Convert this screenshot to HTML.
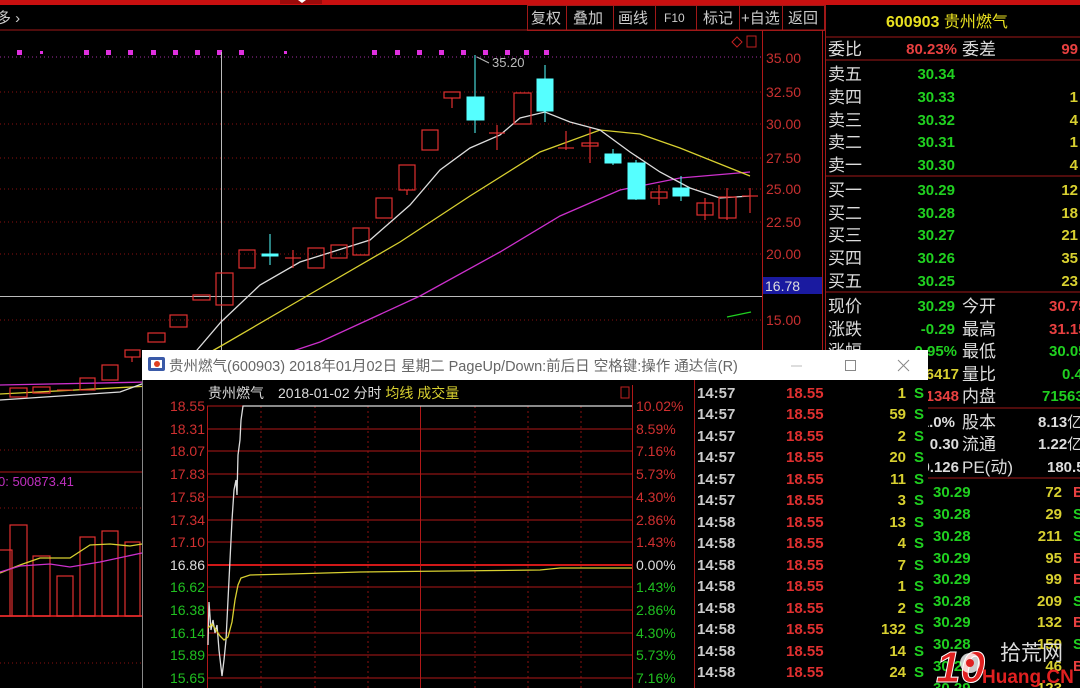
<!DOCTYPE html>
<html><head><meta charset="utf-8">
<style>
html,body{margin:0;padding:0;background:#000;width:1080px;height:688px;overflow:hidden}
svg text{font-family:"Liberation Sans","Noto Sans CJK SC",sans-serif}
.b{font-weight:bold}
</style></head><body>
<svg width="1080" height="688" viewBox="0 0 1080 688" xmlns="http://www.w3.org/2000/svg">
<rect width="1080" height="688" fill="#000"/>
<rect x="0" y="0" width="1080" height="5" fill="#c81010"/>
<rect x="280" y="0" width="42" height="4" fill="#9a0a0a"/>
<path d="M298 0 L302 3 L306 0Z" fill="#fff"/>
<line x1="0" y1="30" x2="825" y2="30" stroke="#a01818" stroke-width="1"/>
<text x="-4" y="23" fill="#ccc" font-size="15">多 ›</text>
<g stroke="#a01818" fill="none"><rect x="527.5" y="5.5" width="297" height="25"/>
<line x1="566.5" y1="5" x2="566.5" y2="30"/><line x1="613.5" y1="5" x2="613.5" y2="30"/><line x1="655.5" y1="5" x2="655.5" y2="30"/><line x1="696.5" y1="5" x2="696.5" y2="30"/><line x1="739.5" y1="5" x2="739.5" y2="30"/><line x1="782.5" y1="5" x2="782.5" y2="30"/></g>
<g fill="#ccc" font-size="15"><text x="531" y="23">复权</text><text x="573" y="23">叠加</text><text x="618" y="23">画线</text><text x="664" y="22" font-size="12">F10</text><text x="703" y="23">标记</text><text x="741" y="23">+自选</text><text x="788" y="23">返回</text></g>
<line x1="762.5" y1="30" x2="762.5" y2="350" stroke="#b01818"/>
<line x1="822.5" y1="30" x2="822.5" y2="350" stroke="#b01818"/>
<g fill="#c83030" font-size="14"><text x="766" y="63">35.00</text><text x="766" y="97">32.50</text><text x="766" y="129">30.00</text><text x="766" y="163">27.50</text><text x="766" y="194">25.00</text><text x="766" y="227">22.50</text><text x="766" y="259">20.00</text><text x="766" y="325">15.00</text></g>
<rect x="763" y="277" width="59" height="17" fill="#1a1aa0"/>
<text x="765" y="291" fill="#ddd" font-size="14">16.78</text>
<g stroke="#8a1010" stroke-dasharray="1 3"><line x1="0" y1="92" x2="762" y2="92"/><line x1="0" y1="124" x2="762" y2="124"/><line x1="0" y1="158" x2="762" y2="158"/><line x1="0" y1="189" x2="762" y2="189"/><line x1="0" y1="222" x2="762" y2="222"/><line x1="0" y1="254" x2="762" y2="254"/><line x1="0" y1="320" x2="762" y2="320"/><line x1="0" y1="450" x2="762" y2="450"/><line x1="0" y1="508" x2="762" y2="508"/><line x1="0" y1="663" x2="762" y2="663"/></g>
<line x1="0" y1="57" x2="762" y2="57" stroke="#a030a0" stroke-dasharray="1 3"/>
<g fill="#e030e0"><rect x="17" y="50" width="5" height="5"/><rect x="40" y="51" width="3" height="3"/><rect x="84" y="50" width="5" height="5"/><rect x="106" y="50" width="5" height="5"/><rect x="128" y="50" width="5" height="5"/><rect x="151" y="50" width="5" height="5"/><rect x="173" y="50" width="5" height="5"/><rect x="195" y="50" width="5" height="5"/><rect x="217" y="50" width="5" height="5"/><rect x="239" y="50" width="5" height="5"/><rect x="284" y="51" width="3" height="3"/><rect x="372" y="50" width="5" height="5"/><rect x="395" y="50" width="5" height="5"/><rect x="417" y="50" width="5" height="5"/><rect x="439" y="50" width="5" height="5"/><rect x="461" y="50" width="5" height="5"/><rect x="483" y="50" width="5" height="5"/><rect x="505" y="50" width="5" height="5"/><rect x="524" y="50" width="5" height="5"/><rect x="544" y="50" width="5" height="5"/></g>
<path d="M732 42 L737 37 L742 42 L737 47Z" fill="none" stroke="#c02020"/>
<rect x="747" y="36" width="9" height="11" fill="none" stroke="#c02020"/>
<line x1="221.5" y1="52" x2="221.5" y2="350" stroke="#bbb"/>
<line x1="0" y1="296.5" x2="762" y2="296.5" stroke="#bbb"/>
<line x1="477" y1="57" x2="489" y2="63" stroke="#bbb"/>
<text x="492" y="67" fill="#bbb" font-size="13">35.20</text>
<polyline fill="none" stroke="#cc30cc" stroke-width="1.3" points="0,385 150,382 230,372 320,342 420,296 500,252 560,216 620,190 680,178 750,172"/>
<polyline fill="none" stroke="#d8d030" stroke-width="1.3" points="0,394 150,386 221,346 300,300 400,242 470,196 540,152 600,130 640,134 680,148 720,164 750,176"/>
<polyline fill="none" stroke="#ddd" stroke-width="1.3" points="0,400 120,392 180,370 221,322 260,285 300,262 370,240 410,205 440,170 470,148 500,135 520,118 545,112 570,122 600,130 630,152 660,172 690,188 720,198 750,196"/>
<line x1="727" y1="317" x2="751" y2="312" stroke="#20d020" stroke-width="1.3"/>
<g fill="none" stroke="#e03030" stroke-width="1.2">
<rect x="10" y="388" width="17" height="9"/><rect x="33" y="387" width="17" height="6"/><line x1="57" y1="390" x2="73" y2="390"/>
<rect x="80" y="378" width="15" height="12"/><rect x="102" y="365" width="16" height="15"/><rect x="125" y="350" width="15" height="7"/><line x1="132" y1="357" x2="132" y2="362"/>
<rect x="148" y="333" width="17" height="9"/><rect x="170" y="315" width="17" height="12"/><rect x="193" y="295" width="17" height="5"/><rect x="216" y="273" width="17" height="32"/>
<rect x="239" y="250" width="16" height="18"/><line x1="285" y1="258" x2="301" y2="258"/><line x1="293" y1="250" x2="293" y2="268"/>
<rect x="308" y="248" width="16" height="20"/><rect x="331" y="245" width="16" height="13"/><rect x="353" y="228" width="16" height="27"/>
<rect x="376" y="198" width="16" height="20"/><rect x="399" y="165" width="16" height="25"/><line x1="407" y1="190" x2="407" y2="195"/><rect x="422" y="130" width="16" height="20"/>
<rect x="444" y="92" width="16" height="6"/><line x1="452" y1="98" x2="452" y2="108"/>
<line x1="489" y1="133" x2="505" y2="133"/><line x1="497" y1="125" x2="497" y2="150"/>
<rect x="514" y="93" width="17" height="31"/>
<line x1="558" y1="148" x2="574" y2="148"/><line x1="566" y1="131" x2="566" y2="150"/>
<rect x="582" y="143" width="16" height="3"/><line x1="590" y1="128" x2="590" y2="163"/>
<rect x="651" y="192" width="16" height="6"/><line x1="659" y1="185" x2="659" y2="205"/>
<rect x="697" y="203" width="16" height="12"/><line x1="705" y1="198" x2="705" y2="220"/>
<rect x="719" y="197" width="17" height="21"/><line x1="727" y1="188" x2="727" y2="220"/>
<line x1="742" y1="196" x2="758" y2="196"/><line x1="750" y1="188" x2="750" y2="213"/>
</g>
<g fill="#55ffff" stroke="#55ffff">
<line x1="270" y1="234" x2="270" y2="265"/><rect x="262" y="254" width="16" height="2"/>
<line x1="475" y1="55" x2="475" y2="133"/><rect x="467" y="97" width="17" height="23"/>
<line x1="545" y1="65" x2="545" y2="122"/><rect x="537" y="79" width="16" height="32"/>
<line x1="613" y1="149" x2="613" y2="165"/><rect x="605" y="154" width="16" height="9"/>
<line x1="636" y1="160" x2="636" y2="200"/><rect x="628" y="163" width="17" height="36"/>
<line x1="681" y1="176" x2="681" y2="201"/><rect x="673" y="188" width="16" height="8"/>
</g>
<line x1="0" y1="472" x2="762" y2="472" stroke="#b01818"/>
<line x1="0" y1="616" x2="762" y2="616" stroke="#b01818" stroke-width="2"/>
<text x="-2" y="486" fill="#c030c0" font-size="13">0: 500873.41</text>
<g fill="none" stroke="#e03030" stroke-width="1.2"><rect x="-3" y="550" width="15" height="66"/><rect x="10" y="525" width="17" height="91"/><rect x="33" y="556" width="17" height="60"/><rect x="57" y="576" width="16" height="40"/><rect x="80" y="537" width="15" height="79"/><rect x="102" y="531" width="16" height="85"/><rect x="125" y="542" width="15" height="74"/></g>
<polyline fill="none" stroke="#d8d030" stroke-width="1.3" points="0,573 20,565 40,558 60,558 70,558 90,545 110,544 130,546 142,544"/>
<polyline fill="none" stroke="#cc30cc" stroke-width="1.3" points="0,572 20,566 50,564 70,567 100,562 142,553"/>
<line x1="825.5" y1="5" x2="825.5" y2="688" stroke="#a01818"/>
<g stroke="#a01818"><line x1="825" y1="37" x2="1080" y2="37"/><line x1="825" y1="60" x2="1080" y2="60"/><line x1="825" y1="176" x2="1080" y2="176"/><line x1="825" y1="292" x2="1080" y2="292"/><line x1="825" y1="408" x2="1080" y2="408"/><line x1="825" y1="478" x2="1080" y2="478"/></g>
<text x="886" y="27" fill="#e8e020" font-size="16" class="b">600903 <tspan font-weight="normal">贵州燃气</tspan></text>
<g fill="#ddd" font-size="17">
<text x="828" y="55">委比</text><text x="962" y="55">委差</text>
<text x="828" y="80">卖五</text><text x="828" y="103">卖四</text><text x="828" y="126">卖三</text><text x="828" y="148">卖二</text><text x="828" y="171">卖一</text>
<text x="828" y="196">买一</text><text x="828" y="219">买二</text><text x="828" y="241">买三</text><text x="828" y="264">买四</text><text x="828" y="287">买五</text>
<text x="828" y="312">现价</text><text x="962" y="312">今开</text><text x="828" y="335">涨跌</text><text x="962" y="335">最高</text>
<text x="828" y="357">涨幅</text><text x="962" y="357">最低</text><text x="962" y="380">量比</text><text x="962" y="402">内盘</text>
<text x="962" y="428">股本</text><text x="962" y="450">流通</text><text x="962" y="473">PE(动)</text>
</g>
<g font-size="15" class="b" text-anchor="end">
<text x="957" y="54" fill="#e84040">80.23%</text><text x="1078" y="54" fill="#e84040">99</text>
<g fill="#20d020"><text x="955" y="79">30.34</text><text x="955" y="102">30.33</text><text x="955" y="125">30.32</text><text x="955" y="147">30.31</text><text x="955" y="170">30.30</text><text x="955" y="195">30.29</text><text x="955" y="218">30.28</text><text x="955" y="240">30.27</text><text x="955" y="263">30.26</text><text x="955" y="286">30.25</text><text x="955" y="311">30.29</text><text x="955" y="334">-0.29</text><text x="957" y="356">-0.95%</text></g>
<g fill="#d8d030"><text x="1078" y="102">1</text><text x="1078" y="125">4</text><text x="1078" y="147">1</text><text x="1078" y="170">4</text><text x="1078" y="195">12</text><text x="1078" y="218">18</text><text x="1078" y="240">21</text><text x="1078" y="263">35</text><text x="1078" y="286">23</text><text x="959" y="379">36417</text></g>
<text x="959" y="401" fill="#e84040">21348</text>
<g fill="#ddd"><text x="955" y="427">1.0%</text><text x="959" y="449">0.30</text><text x="959" y="472">0.126</text></g>
</g>
<g font-size="15" class="b">
<text x="1049" y="311" fill="#e84040">30.75</text><text x="1049" y="334" fill="#e84040">31.15</text><text x="1049" y="356" fill="#20d020">30.05</text><text x="1062" y="379" fill="#20d020">0.45</text><text x="1042" y="401" fill="#20d020">71563</text>
<text x="1038" y="427" fill="#ddd">8.13<tspan font-weight="normal">亿</tspan></text><text x="1038" y="449" fill="#ddd">1.22<tspan font-weight="normal">亿</tspan></text><text x="1047" y="472" fill="#ddd">180.5</text>
</g>
<g font-size="15" class="b">
<g fill="#20d020"><text x="933" y="497">30.29</text><text x="933" y="519">30.28</text><text x="933" y="541">30.28</text><text x="933" y="563">30.29</text><text x="933" y="584">30.29</text><text x="933" y="606">30.28</text><text x="933" y="627">30.29</text><text x="933" y="649">30.28</text><text x="933" y="671">30.29</text><text x="933" y="693">30.29</text></g>
<g fill="#d8d030" text-anchor="end"><text x="1062" y="497">72</text><text x="1062" y="519">29</text><text x="1062" y="541">211</text><text x="1062" y="563">95</text><text x="1062" y="584">99</text><text x="1062" y="606">209</text><text x="1062" y="627">132</text><text x="1062" y="649">150</text><text x="1062" y="671">46</text><text x="1062" y="693">123</text></g>
<text x="1073" y="497" fill="#e84040">B</text><text x="1073" y="519" fill="#20d020">S</text><text x="1073" y="541" fill="#20d020">S</text><text x="1073" y="563" fill="#e84040">B</text><text x="1073" y="584" fill="#e84040">B</text><text x="1073" y="606" fill="#20d020">S</text><text x="1073" y="627" fill="#e84040">B</text><text x="1073" y="649" fill="#20d020">S</text><text x="1073" y="671" fill="#e84040">B</text>
</g>
<text x="936" y="682" fill="#e02020" font-size="44" font-weight="bold" font-style="italic" stroke="#fff" stroke-width="1">10</text>
<circle cx="970" cy="663" r="10" fill="#fff" opacity="0.8"/>
<circle cx="970" cy="663" r="4" fill="#e02020"/>
<text x="1000" y="660" fill="#ddd" font-size="21">拾荒网</text>
<text x="982" y="683" fill="#e02020" font-size="19" font-weight="bold">Huang.CN</text>
<rect x="142" y="350" width="786" height="338" fill="#000"/>
<rect x="142" y="350" width="786" height="30" fill="#fff"/>
<rect x="148" y="357" width="17" height="14" rx="2" fill="#3a5aa8"/><rect x="151" y="360" width="11" height="8" fill="#fff"/><circle cx="157" cy="364" r="3" fill="#e04020"/>
<text x="169" y="371" fill="#666" font-size="14.5">贵州燃气(600903) 2018年01月02日 星期二 PageUp/Down:前后日 空格键:操作 通达信(R)</text>
<line x1="791" y1="366" x2="802" y2="366" stroke="#bbb"/>
<rect x="845.5" y="360.5" width="10" height="10" fill="none" stroke="#888"/>
<path d="M898 360 L909 371 M909 360 L898 371" stroke="#888"/>
<line x1="142.5" y1="380" x2="142.5" y2="688" stroke="#888"/>
<text x="208" y="398" fill="#ddd" font-size="14">贵州燃气</text>
<text x="278" y="398" fill="#ddd" font-size="14">2018-01-02 分时 <tspan fill="#d8d030">均线 成交量</tspan></text>
<rect x="621" y="387" width="8" height="11" fill="none" stroke="#c02020"/>
<line x1="207.5" y1="406" x2="207.5" y2="688" stroke="#b01818"/>
<line x1="632.5" y1="385" x2="632.5" y2="688" stroke="#b01818"/>
<line x1="420.5" y1="406" x2="420.5" y2="688" stroke="#b01818"/>
<g stroke="#8a1010" stroke-dasharray="2 3"><line x1="261" y1="406" x2="261" y2="688"/><line x1="315" y1="406" x2="315" y2="688"/><line x1="368" y1="406" x2="368" y2="688"/><line x1="475" y1="406" x2="475" y2="688"/><line x1="528" y1="406" x2="528" y2="688"/><line x1="581" y1="406" x2="581" y2="688"/></g>
<g stroke="#b01818"><line x1="207" y1="406" x2="632" y2="406"/><line x1="207" y1="429" x2="632" y2="429"/><line x1="207" y1="451" x2="632" y2="451"/><line x1="207" y1="474" x2="632" y2="474"/><line x1="207" y1="497" x2="632" y2="497"/><line x1="207" y1="520" x2="632" y2="520"/><line x1="207" y1="542" x2="632" y2="542"/><line x1="207" y1="587" x2="632" y2="587"/><line x1="207" y1="610" x2="632" y2="610"/><line x1="207" y1="633" x2="632" y2="633"/><line x1="207" y1="655" x2="632" y2="655"/><line x1="207" y1="678" x2="632" y2="678"/></g>
<line x1="207" y1="565" x2="632" y2="565" stroke="#d01818" stroke-width="2"/>
<g font-size="14" text-anchor="end">
<g fill="#d03030"><text x="205" y="411">18.55</text><text x="205" y="434">18.31</text><text x="205" y="456">18.07</text><text x="205" y="479">17.83</text><text x="205" y="502">17.58</text><text x="205" y="525">17.34</text><text x="205" y="547">17.10</text></g>
<text x="205" y="570" fill="#ddd">16.86</text>
<g fill="#20c020"><text x="205" y="592">16.62</text><text x="205" y="615">16.38</text><text x="205" y="638">16.14</text><text x="205" y="660">15.89</text><text x="205" y="683">15.65</text></g>
</g>
<g font-size="14">
<g fill="#d03030"><text x="636" y="411">10.02%</text><text x="636" y="434">8.59%</text><text x="636" y="456">7.16%</text><text x="636" y="479">5.73%</text><text x="636" y="502">4.30%</text><text x="636" y="525">2.86%</text><text x="636" y="547">1.43%</text></g>
<text x="636" y="570" fill="#ddd">0.00%</text>
<g fill="#20c020"><text x="636" y="592">1.43%</text><text x="636" y="615">2.86%</text><text x="636" y="638">4.30%</text><text x="636" y="660">5.73%</text><text x="636" y="683">7.16%</text></g>
</g>
<polyline fill="none" stroke="#ddd" stroke-width="1.3" points="208,645 209,602 211,630 213,620 215,633 217,625 219,650 222,676 224,660 226,640 228,600 230,560 232,520 234,490 236,480 237,495 238,455 240,440 241,420 243,406 632,406"/>
<polyline fill="none" stroke="#d8d030" stroke-width="1.3" points="208,628 212,624 216,630 220,636 224,640 228,637 232,622 235,600 238,585 241,578 250,575 290,574 360,572 450,571 540,570 560,568 632,568"/>
<line x1="694.5" y1="380" x2="694.5" y2="688" stroke="#a01818"/>
<g font-size="15" class="b">
<g fill="#ccc"><text x="697" y="398">14:57</text><text x="697" y="419">14:57</text><text x="697" y="441">14:57</text><text x="697" y="462">14:57</text><text x="697" y="484">14:57</text><text x="697" y="505">14:57</text><text x="697" y="527">14:58</text><text x="697" y="548">14:58</text><text x="697" y="570">14:58</text><text x="697" y="591">14:58</text><text x="697" y="613">14:58</text><text x="697" y="634">14:58</text><text x="697" y="656">14:58</text><text x="697" y="677">14:58</text><text x="697" y="699">14:58</text></g>
<g fill="#e03030"><text x="786" y="398">18.55</text><text x="786" y="419">18.55</text><text x="786" y="441">18.55</text><text x="786" y="462">18.55</text><text x="786" y="484">18.55</text><text x="786" y="505">18.55</text><text x="786" y="527">18.55</text><text x="786" y="548">18.55</text><text x="786" y="570">18.55</text><text x="786" y="591">18.55</text><text x="786" y="613">18.55</text><text x="786" y="634">18.55</text><text x="786" y="656">18.55</text><text x="786" y="677">18.55</text><text x="786" y="699">18.55</text></g>
<g fill="#d8d030" text-anchor="end"><text x="906" y="398">1</text><text x="906" y="419">59</text><text x="906" y="441">2</text><text x="906" y="462">20</text><text x="906" y="484">11</text><text x="906" y="505">3</text><text x="906" y="527">13</text><text x="906" y="548">4</text><text x="906" y="570">7</text><text x="906" y="591">1</text><text x="906" y="613">2</text><text x="906" y="634">132</text><text x="906" y="656">14</text><text x="906" y="677">24</text><text x="906" y="699">2</text></g>
<g fill="#20d020"><text x="914" y="398">S</text><text x="914" y="419">S</text><text x="914" y="441">S</text><text x="914" y="462">S</text><text x="914" y="484">S</text><text x="914" y="505">S</text><text x="914" y="527">S</text><text x="914" y="548">S</text><text x="914" y="570">S</text><text x="914" y="591">S</text><text x="914" y="613">S</text><text x="914" y="634">S</text><text x="914" y="656">S</text><text x="914" y="677">S</text></g>
</g>
</svg>
</body></html>
